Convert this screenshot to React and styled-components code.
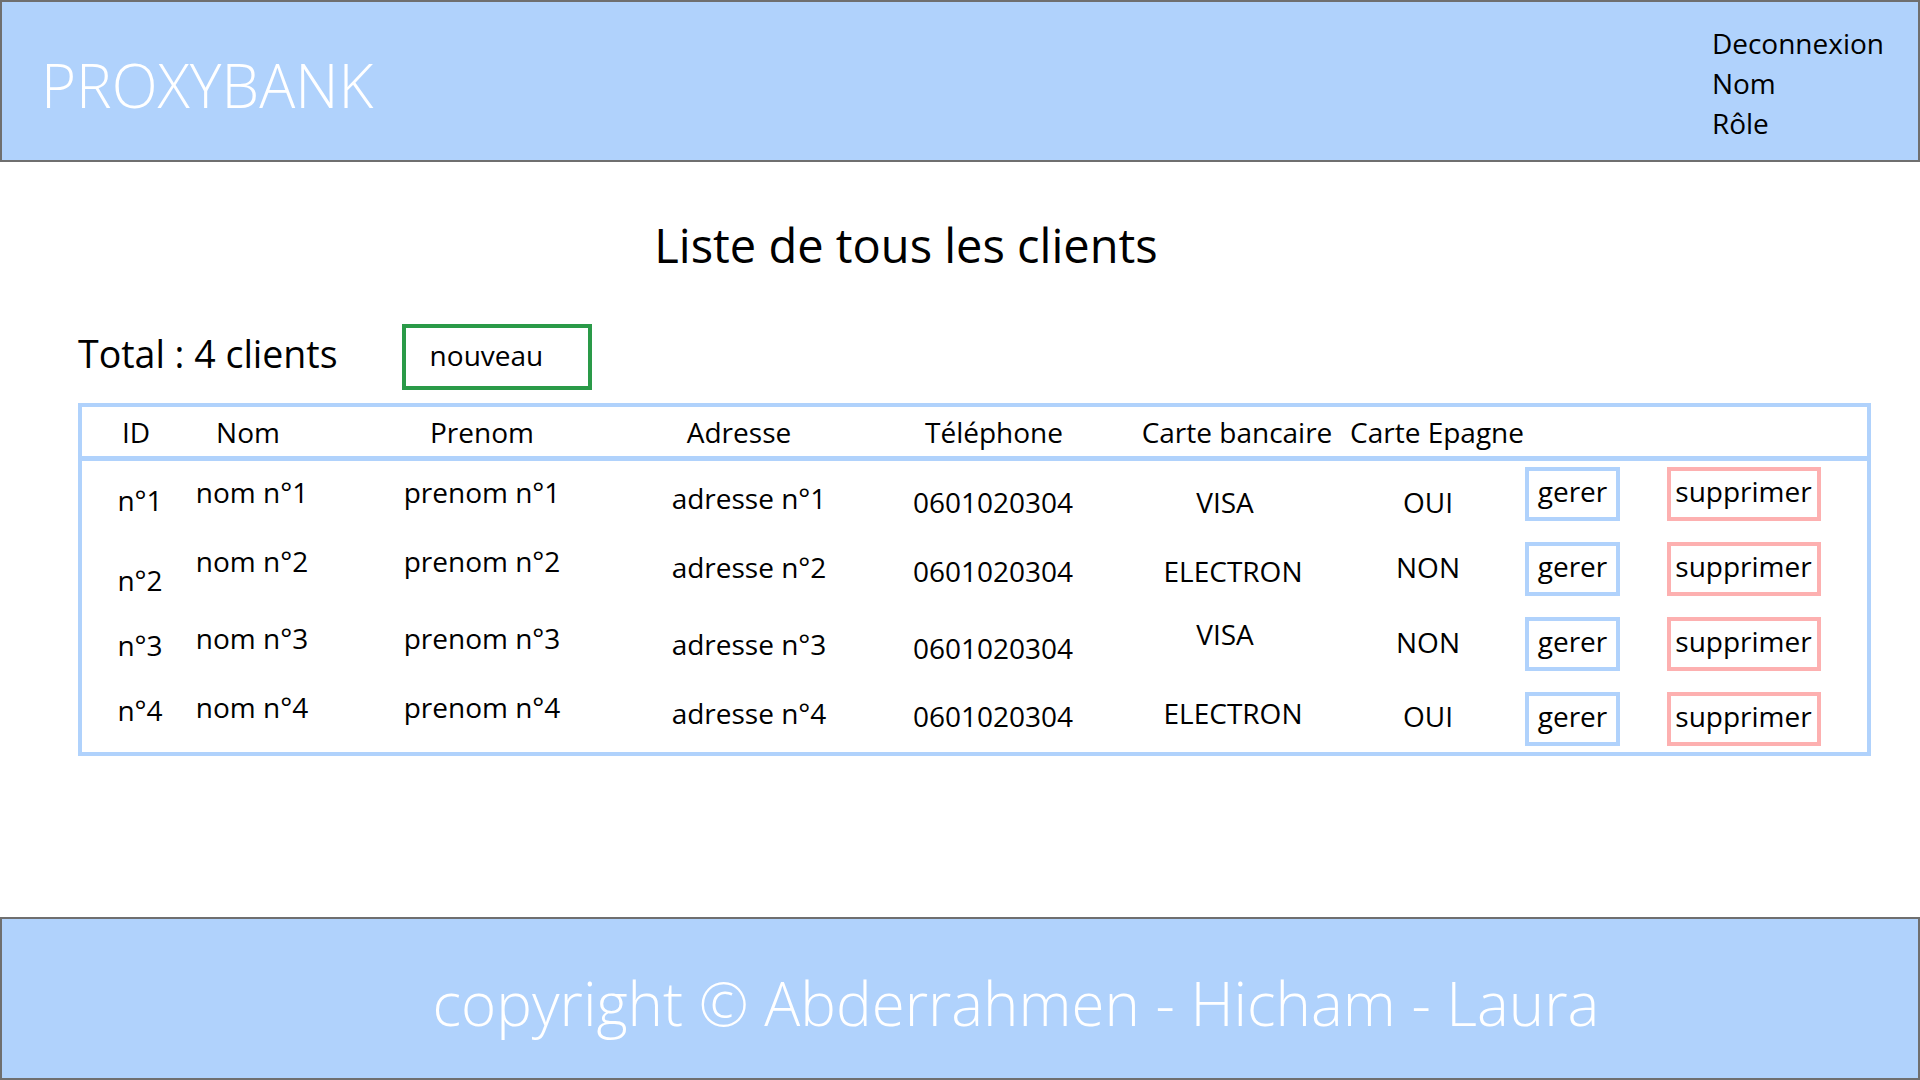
import React from "react";
import styled, { createGlobalStyle } from "styled-components";

const GlobalStyle = createGlobalStyle`
  html, body {
    margin: 0;
    padding: 0;
  }
  body {
    font-family: "Open Sans", "Noto Sans", "Liberation Sans", sans-serif;
    color: #000;
    background: #fff;
  }
  * {
    box-sizing: border-box;
  }
`;

const BLUE = "#b0d2fc";
const PINK = "#fdb0b0";
const GREEN = "#2a9a48";
const FRAME = "#6f6f6f";

// same columns for the head row and the body rows
const COLS = "34px 190px 278px 242px 262px 214px 186px 95px 1fr";

const Page = styled.div`
  display: flex;
  flex-direction: column;
  height: 100vh;
`;

const Header = styled.header`
  height: 162px;
  flex-shrink: 0;
  background: ${BLUE};
  border: 2px solid ${FRAME};
  display: flex;
  align-items: center;
  justify-content: space-between;
  padding: 0 34px 0 39px;
`;

const Logo = styled.div`
  color: #fff;
  font-size: 60px;
  font-weight: 300;
  margin-top: 8px;
`;

const UserMenu = styled.div`
  display: flex;
  flex-direction: column;
  font-size: 28px;
  line-height: 40px;
  margin-top: 4px;
`;

const Main = styled.main`
  flex: 1;
  display: flex;
  flex-direction: column;
  padding: 0 49px 0 78px;
`;

const Title = styled.h1`
  margin: 54px 0 0;
  padding-right: 137px;
  text-align: center;
  font-size: 47px;
  font-weight: 400;
  line-height: 58px;
`;

const Toolbar = styled.div`
  display: flex;
  align-items: center;
  gap: 64px;
  height: 66px;
  margin-top: 50px;
`;

const Total = styled.div`
  font-size: 37.5px;
  padding-bottom: 8px;
`;

const NewButton = styled.button`
  width: 190px;
  height: 66px;
  border: 4px solid ${GREEN};
  background: #fff;
  padding: 0 0 4px 24px;
  text-align: left;
  font-family: inherit;
  font-size: 28px;
  color: #000;
`;

const Table = styled.div`
  margin-top: 13px;
  border: 4px solid ${BLUE};
`;

const HeadRow = styled.div`
  display: grid;
  grid-template-columns: ${COLS};
  padding-left: 37px;
  height: 54px;
  border-bottom: 5px solid ${BLUE};
  font-size: 28px;
`;

const Body = styled.div`
  display: flex;
  flex-direction: column;
  gap: 21px;
  padding: 6px 0;
`;

const Row = styled.div`
  display: grid;
  grid-template-columns: ${COLS};
  padding-left: 37px;
  height: 54px;
  font-size: 28px;
`;

const Cell = styled.div`
  display: flex;
  align-items: center;
  justify-content: center;
  white-space: nowrap;
  transform: translate(${(p) => p.$dx || 0}px, ${(p) => p.$dy || 0}px);
`;

const ActionButton = styled.button`
  justify-self: center;
  width: ${(p) => p.$width}px;
  height: 54px;
  border: 4px solid ${(p) => p.$color};
  background: #fff;
  padding: 0 0 6px;
  font-family: inherit;
  font-size: 28px;
  color: #000;
`;

const Footer = styled.footer`
  height: 163px;
  flex-shrink: 0;
  background: ${BLUE};
  border: 2px solid ${FRAME};
  display: flex;
  align-items: center;
  justify-content: center;
  padding: 8px 0 0 112px;
  color: #fff;
  font-size: 60px;
  font-weight: 300;
`;

const columns = [
  { key: "id", label: "ID", headDx: 0, dx: 4 },
  { key: "nom", label: "Nom", headDx: 0, dx: 4 },
  { key: "prenom", label: "Prenom", headDx: 0, dx: 0 },
  { key: "adresse", label: "Adresse", headDx: -3, dx: 7 },
  { key: "tel", label: "Téléphone", headDx: 0, dx: -1 },
  { key: "carte", label: "Carte bancaire", headDx: 5, dx: 1 },
  { key: "epargne", label: "Carte Epagne", headDx: 5, dx: -4 },
];

// dy = little vertical offsets of the mockup, per cell
const clients = [
  {
    id: "n°1", nom: "nom n°1", prenom: "prenom n°1", adresse: "adresse n°1",
    tel: "0601020304", carte: "VISA", epargne: "OUI",
    dy: { id: 6, nom: -2, prenom: -2, adresse: 4, tel: 8, carte: 8, epargne: 8 },
  },
  {
    id: "n°2", nom: "nom n°2", prenom: "prenom n°2", adresse: "adresse n°2",
    tel: "0601020304", carte: "ELECTRON", epargne: "NON",
    dy: { id: 11, nom: -8, prenom: -8, adresse: -2, tel: 2, carte: 2, epargne: -2 },
  },
  {
    id: "n°3", nom: "nom n°3", prenom: "prenom n°3", adresse: "adresse n°3",
    tel: "0601020304", carte: "VISA", epargne: "NON",
    dy: { id: 1, nom: -6, prenom: -6, adresse: 0, tel: 4, carte: -10, epargne: -2 },
  },
  {
    id: "n°4", nom: "nom n°4", prenom: "prenom n°4", adresse: "adresse n°4",
    tel: "0601020304", carte: "ELECTRON", epargne: "OUI",
    dy: { id: -9, nom: -12, prenom: -12, adresse: -6, tel: -3, carte: -6, epargne: -3 },
  },
];

const App = () => {
  return (
    <>
      <GlobalStyle />
      <Page>
        <Header>
          <Logo>PROXYBANK</Logo>
          <UserMenu>
            <span>Deconnexion</span>
            <span>Nom</span>
            <span>Rôle</span>
          </UserMenu>
        </Header>

        <Main>
          <Title>Liste de tous les clients</Title>
          <Toolbar>
            <Total>Total : {clients.length} clients</Total>
            <NewButton>nouveau</NewButton>
          </Toolbar>

          <Table>
            <HeadRow>
              {columns.map((c) => (
                <Cell key={c.key} $dx={c.headDx}>{c.label}</Cell>
              ))}
            </HeadRow>
            <Body>
              {clients.map((client) => (
                <Row key={client.id}>
                  {columns.map((c) => (
                    <Cell key={c.key} $dx={c.key === "carte" && client.carte === "VISA" ? -7 : c.dx} $dy={client.dy[c.key]}>
                      {client[c.key]}
                    </Cell>
                  ))}
                  <ActionButton $width={95} $color={BLUE}>gerer</ActionButton>
                  <ActionButton $width={154} $color={PINK}>supprimer</ActionButton>
                </Row>
              ))}
            </Body>
          </Table>
        </Main>

        <Footer>copyright © Abderrahmen - Hicham - Laura</Footer>
      </Page>
    </>
  );
};

export default App;
